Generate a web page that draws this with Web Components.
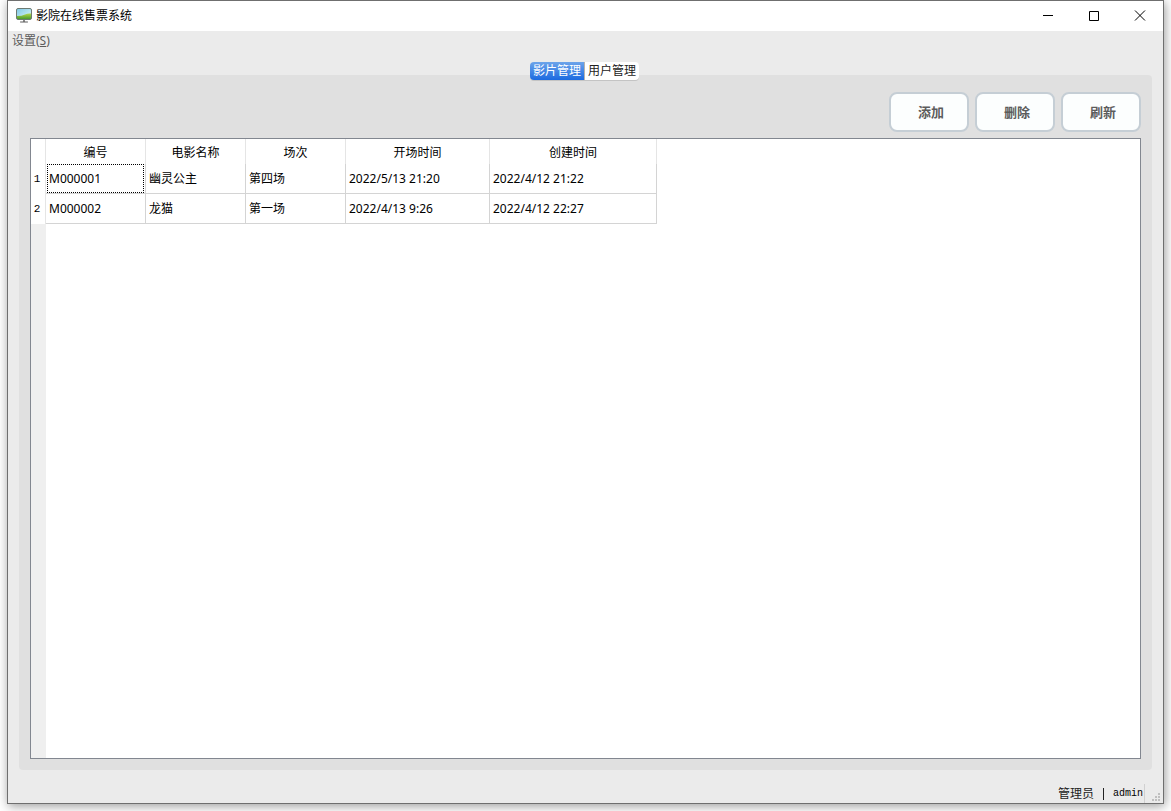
<!DOCTYPE html>
<html lang="zh-CN">
<head>
<meta charset="utf-8">
<title>影院在线售票系统</title>
<style>
  html, body { margin: 0; background: #fff; }
  body {
    box-sizing: border-box;
    min-height: 100vh;
    padding: 0 7px 7px;
    display: flex;
    font: 12px/18px "Noto Sans", "Noto Sans CJK SC", sans-serif;
    color: #000;
  }
</style>
</head>
<body>
<app-window>
  <title-bar slot="title">影院在线售票系统</title-bar>
  <menu-bar slot="menu"></menu-bar>
  <tab-pane>
    <tool-bar>
      <tool-button>添加</tool-button>
      <tool-button>删除</tool-button>
      <tool-button>刷新</tool-button>
    </tool-bar>
    <movie-table></movie-table>
  </tab-pane>
  <status-bar slot="status"><span>管理员</span><span slot="user">admin</span></status-bar>
</app-window>

<script>
  const define = (name, html, setup) => {
    const template = document.createElement('template');
    template.innerHTML = html;
    customElements.define(name, class extends HTMLElement {
      constructor() {
        super();
        const root = this.attachShadow({ mode: 'open' });
        root.append(template.content.cloneNode(true));
        if (setup) setup(root, this);
      }
    });
  };

  define('app-window', `
    <style>
      :host {
        flex: 1; min-width: 0; box-sizing: border-box;
        display: flex; flex-direction: column;
        border: 1px solid #6f6f6f; background: #ebebeb;
        box-shadow: 1px 2px 10px rgba(0,0,0,.4);
      }
      main { flex: 1; display: flex; padding: 11px 11px 14px; }
    </style>
    <slot name="title"></slot>
    <slot name="menu"></slot>
    <main><slot></slot></main>
    <slot name="status"></slot>`);

  define('title-bar', `
    <style>
      :host { display: flex; align-items: center; height: 30px; background: #fff; }
      .logo { width: 16px; height: 16px; margin: 0 4px 0 8px; }
      h1 { margin: 0; flex: 1; font: inherit; }
      button {
        width: 46px; height: 30px; padding: 0; border: 0; background: none;
        display: flex; align-items: center; justify-content: center;
      }
      button svg { width: 12px; height: 12px; }
    </style>
    <svg class="logo" viewBox="0 0 16 16" aria-hidden="true">
      <defs>
        <linearGradient id="sky" x1="0" y1="0" x2="1" y2="1">
          <stop offset="0" stop-color="#7cc8e4"/><stop offset="1" stop-color="#e2f7fa"/>
        </linearGradient>
        <linearGradient id="grass" x1="0" y1="0" x2="0" y2="1">
          <stop offset="0" stop-color="#b4d84c"/><stop offset="1" stop-color="#4a9a2c"/>
        </linearGradient>
      </defs>
      <rect x="0.5" y="0.5" width="15" height="11" rx="1.5" fill="url(#sky)"/>
      <path d="M1 8Q6 8 9 6.500T15 5.500V11H1Z" fill="url(#grass)"/>
      <rect x="0.5" y="0.5" width="15" height="11" rx="1.5" fill="none" stroke="#6c7a72"/>
      <path d="M7 12h2v2H7z" fill="#888"/>
      <path d="M4.500 14h7" stroke="#5c5c5c" stroke-linecap="round"/>
    </svg>
    <h1><slot></slot></h1>
    <button aria-label="最小化"><svg viewBox="0 0 12 12"><path d="M1 5.5h10" stroke="#000"/></svg></button>
    <button aria-label="最大化"><svg viewBox="0 0 12 12"><path d="M1.500 1.500h9v9h-9z" fill="none" stroke="#000"/></svg></button>
    <button aria-label="关闭"><svg viewBox="0 0 12 12"><path d="M1 0.500L11 10.500M11 0.500L1 10.500" stroke="#000"/></svg></button>`);

  define('menu-bar', `
    <style>
      :host { display: flex; height: 20px; }
      button { padding: 0 4px; border: 0; background: none; font: inherit; color: #5c5c5c; }
    </style>
    <button>设置(<u>S</u>)</button>`);

  define('tab-pane', `
    <style>
      :host { flex: 1; min-width: 0; display: flex; flex-direction: column; }
      [role=tablist] { display: flex; justify-content: center; padding-right: 2px; margin-bottom: -5px; position: relative; }
      button {
        height: 18px; padding: 0 3px; border: 0; white-space: nowrap;
        font: inherit; background: #fff; color: #222;
        box-shadow: 0 1px 0 #c4c4c4;
      }
      button:first-child { border-radius: 4px 0 0 4px; }
      button:last-child { border-radius: 0 4px 4px 0; }
      button[aria-selected=true] { color: #fff; background: linear-gradient(#6da4ea, #1c6ae0); border-right: 1px solid #b9b4ae; }
      section {
        flex: 1; display: flex; flex-direction: column; gap: 6px;
        padding: 17px 11px 11px; border-radius: 4px; background: #e0e0e0;
      }
    </style>
    <div role="tablist">
      <button role="tab" id="movies" aria-selected="true">影片管理</button>
      <button role="tab" aria-selected="false">用户管理</button>
    </div>
    <section role="tabpanel" aria-labelledby="movies"><slot></slot></section>`);

  define('tool-bar', `
    <style>:host { display: flex; justify-content: flex-end; gap: 6px; }</style>
    <slot></slot>`);

  define('tool-button', `
    <style>
      :host { display: block; }
      button {
        box-sizing: border-box; width: 80px; height: 40px; padding: 0 0 0 4px;
        border: 2px solid #c5ced5; border-radius: 8px; background: #fcfefe;
        font: bold 13px/18px "Noto Sans CJK SC", sans-serif; color: #5c5c5c;
      }
    </style>
    <button><slot></slot></button>`);

  const movies = [
    ['M000001', '幽灵公主', '第四场', '2022/5/13 21:20', '2022/4/12 21:22'],
    ['M000002', '龙猫', '第一场', '2022/4/13 9:26', '2022/4/12 22:27']
  ];

  define('movie-table', `
    <style>
      :host {
        flex: 1; border: 1px solid #828790;
        background: linear-gradient(#efefef, #efefef) 0 0 / 15px 100% no-repeat #fff;
      }
      table { width: 626px; table-layout: fixed; border-collapse: separate; border-spacing: 0; }
      .index { width: 15px; }
      .short { width: 100px; }
      .start { width: 144px; }
      .created { width: 167px; }
      th, td { box-sizing: border-box; background: #fff; border-right: 1px solid #d4d4d4; }
      th { padding: 0; font-weight: normal; }
      thead th, thead td { height: 25px; padding: 2px 0 0; border-color: #e5e5e5; }
      tbody th { padding-right: 2px; border-color: #e5e5e5; font: 11px/18px "Liberation Mono", monospace; }
      tbody td { height: 30px; padding: 0 1px; border-bottom: 1px solid #d4d4d4; }
      tbody td div { box-sizing: border-box; height: 29px; padding: 0 1px; line-height: 27px; border: 1px solid transparent; }
      tbody td .current { border: 1px dotted #000; }
    </style>
    <table>
      <colgroup>
        <col class="index"><col class="short"><col class="short"><col class="short"><col class="start"><col class="created">
      </colgroup>
      <thead>
        <tr><td></td><th scope="col">编号</th><th scope="col">电影名称</th><th scope="col">场次</th><th scope="col">开场时间</th><th scope="col">创建时间</th></tr>
      </thead>
      <tbody></tbody>
    </table>`, root => {
      const body = root.querySelector('tbody');
      movies.forEach((movie, i) => {
        const row = body.insertRow();
        const head = document.createElement('th');
        head.scope = 'row';
        head.textContent = i + 1;
        row.append(head);
        movie.forEach((text, j) => {
          const box = document.createElement('div');
          box.textContent = text;
          if (i === 0 && j === 0) box.className = 'current';
          row.insertCell().append(box);
        });
      });
    });

  define('status-bar', `
    <style>
      :host { display: flex; justify-content: flex-end; height: 19px; color: #222; }
      .user { display: flex; align-items: center; gap: 7px; border-right: 1px solid #d0d0d0; padding-right: 1px; }
      .name { font: 10px/18px "Liberation Mono", monospace; color: #000; }
      .bar { width: 1px; height: 12px; margin: 0 2px; background: #222; }
      svg { width: 8px; height: 8px; margin: 0 3px 0 7px; align-self: flex-end; }
      .grip { display: flex; padding-bottom: 2px; }
    </style>
    <div class="user"><slot></slot><i class="bar"></i><span class="name"><slot name="user"></slot></span></div>
    <div class="grip"><svg viewBox="0 0 8 8" fill="#bfbfbf" aria-hidden="true">
      <path d="M6 0h2v2H6zM3 3h2v2H3zM6 3h2v2H6zM0 6h2v2H0zM3 6h2v2H3zM6 6h2v2H6z"/>
    </svg></div>`);
</script>
</body>
</html>
